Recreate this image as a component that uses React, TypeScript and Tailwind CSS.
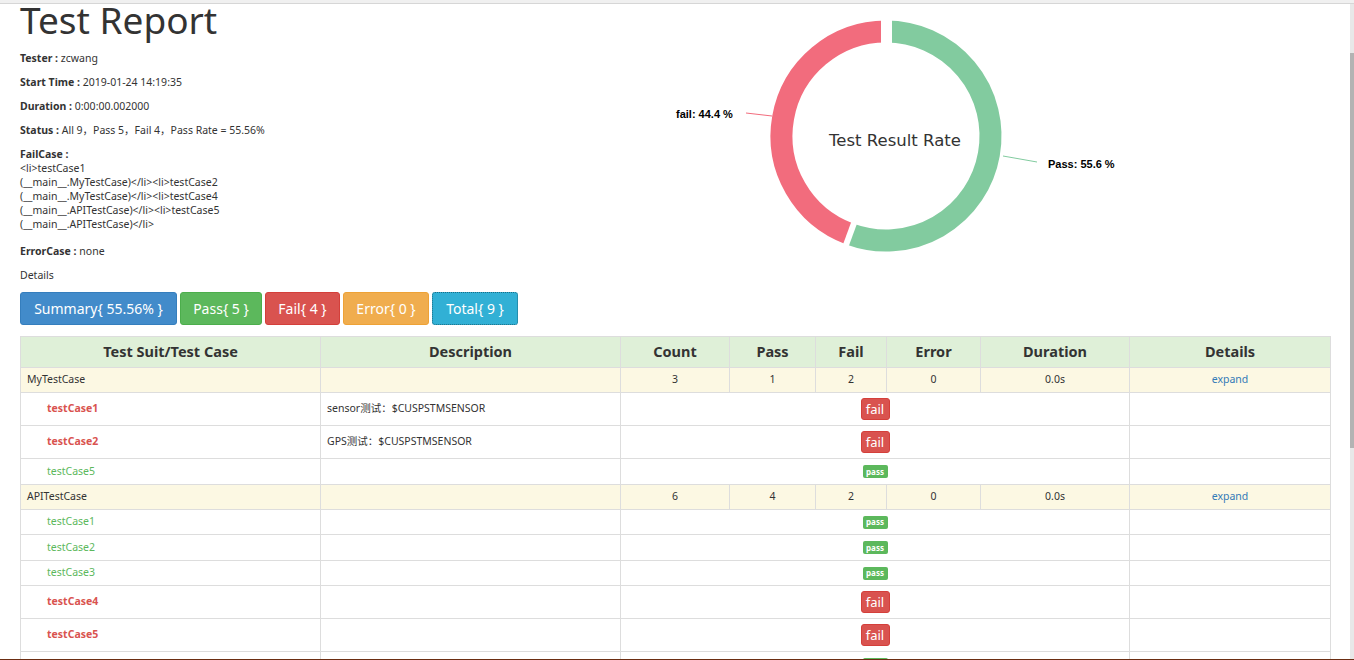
import React from "react";

type CaseRow = {
  name: string;
  desc?: string;
  status: "pass" | "fail";
  tall?: boolean;
};

type Suite = {
  name: string;
  count: number;
  pass: number;
  fail: number;
  error: number;
  duration: string;
  cases: CaseRow[];
};

const suites: Suite[] = [
  {
    name: "MyTestCase",
    count: 3,
    pass: 1,
    fail: 2,
    error: 0,
    duration: "0.0s",
    cases: [
      { name: "testCase1", desc: "sensor测试：$CUSPSTMSENSOR", status: "fail" },
      { name: "testCase2", desc: "GPS测试：$CUSPSTMSENSOR", status: "fail" },
      { name: "testCase5", status: "pass", tall: true },
    ],
  },
  {
    name: "APITestCase",
    count: 6,
    pass: 4,
    fail: 2,
    error: 0,
    duration: "0.0s",
    cases: [
      { name: "testCase1", status: "pass" },
      { name: "testCase2", status: "pass", tall: true },
      { name: "testCase3", status: "pass" },
      { name: "testCase4", status: "fail" },
      { name: "testCase5", status: "fail" },
      { name: "testCase6", status: "pass" },
    ],
  },
];

const FONT = "font-['Noto_Sans','Noto_Sans_CJK_SC',sans-serif]";

function Info({ label, children }: { label: string; children: React.ReactNode }) {
  return (
    <p className="mb-[10px] leading-[14px]">
      <b>{label} :</b> {children}
    </p>
  );
}

// donut geometry, svg coords = page coords - (640, 4)
const CX = 246;
const CY = 132;
const R = 104.5;

function polar(deg: number, r: number) {
  const a = (deg * Math.PI) / 180;
  return [CX + r * Math.sin(a), CY - r * Math.cos(a)];
}

function arc(from: number, to: number) {
  const [x1, y1] = polar(from, R);
  const [x2, y2] = polar(to, R);
  const large = to - from > 180 ? 1 : 0;
  return `M ${x1} ${y1} A ${R} ${R} 0 ${large} 1 ${x2} ${y2}`;
}

function Donut() {
  const split = 200.16;
  const [gx, gy] = polar(split, 130);
  return (
    <svg width="690" height="280" className="block">
      <line x1="249" y1="0" x2="251" y2="19" stroke="#f7c08a" strokeWidth="1" />
      <path d={arc(0, split)} fill="none" stroke="#82cb9f" strokeWidth="22" />
      <path d={arc(split, 360)} fill="none" stroke="#f26c7d" strokeWidth="22" />
      <line x1={CX + 0.5} y1={CY} x2={CX + 0.5} y2="0" stroke="#fff" strokeWidth="11" />
      <line x1={CX} y1={CY} x2={gx} y2={gy} stroke="#fff" strokeWidth="6" />
      <line x1="106" y1="109" x2="132" y2="112" stroke="#f26c7d" strokeWidth="1" />
      <line x1="363" y1="152" x2="397" y2="158" stroke="#82cb9f" strokeWidth="1" />
      <text
        x="36"
        y="114"
        fontFamily="'Liberation Sans', Arial, sans-serif"
        fontSize="11"
        fontWeight="bold"
        fill="#000"
      >
        fail: 44.4 %
      </text>
      <text
        x="408"
        y="164"
        fontFamily="'Liberation Sans', Arial, sans-serif"
        fontSize="11"
        fontWeight="bold"
        fill="#000"
      >
        Pass: 55.6 %
      </text>
      <text
        x="255"
        y="142"
        textAnchor="middle"
        fontFamily="'DejaVu Sans', Verdana, sans-serif"
        fontSize="16.5"
        fill="#333"
      >
        Test Result Rate
      </text>
    </svg>
  );
}

function Badge({ status }: { status: "pass" | "fail" }) {
  if (status === "fail") {
    return (
      <span className="inline-flex h-[22px] w-[29px] items-center justify-center rounded-[3px] border border-[#d43f3a] bg-[#d9534f] text-[13px] leading-none text-white">
        fail
      </span>
    );
  }
  return (
    <span className="inline-flex h-[13px] w-[25px] items-center justify-center rounded-[2px] bg-[#5cb85c] text-[8px] font-bold leading-none text-white">
      pass
    </span>
  );
}

const td = "border border-[#ddd] p-0";

function rowHeight(c: CaseRow) {
  if (c.status === "fail") return "h-[33px]";
  return c.tall ? "h-[26px]" : "h-[25px]";
}

export default function App() {
  return (
    <div className={`flex h-[660px] flex-col overflow-hidden bg-white text-[10.5px] text-[#333] ${FONT}`}>
      <div className="h-[4px] shrink-0 border-b border-[#d6d6d6] bg-[#f0f0f0]" />
      <div className="flex min-h-0 flex-1">
        <div className="min-w-0 flex-1 overflow-hidden px-5">
          <div className="flex items-start">
            <div className="w-[620px] shrink-0">
              <h1 className="mb-[15px] text-[37px] leading-[32px] font-normal text-[#333]">Test Report</h1>
              <Info label="Tester">zcwang</Info>
              <Info label="Start Time">2019-01-24 14:19:35</Info>
              <Info label="Duration">0:00:00.002000</Info>
              <Info label="Status">All 9，Pass 5，Fail 4，Pass Rate = 55.56%</Info>
              <div className="mb-[13px] leading-[14px]">
                <b>FailCase :</b>
                <br />
                {"<li>testCase1"}
                <br />
                {"(__main__.MyTestCase)</li><li>testCase2"}
                <br />
                {"(__main__.MyTestCase)</li><li>testCase4"}
                <br />
                {"(__main__.APITestCase)</li><li>testCase5"}
                <br />
                {"(__main__.APITestCase)</li>"}
              </div>
              <Info label="ErrorCase">none</Info>
              <p className="mb-[10px] leading-[14px]">Details</p>
            </div>
            <div className="flex-1">
              <Donut />
            </div>
          </div>

          <div className="mb-[11px] flex gap-[3px] text-[14px] leading-none text-white">
            <button className="h-[33px] w-[157px] rounded-[3px] border border-[#357ebd] bg-[#428bca]">
              Summary{"{"} 55.56% {"}"}
            </button>
            <button className="h-[33px] w-[82px] rounded-[3px] border border-[#4cae4c] bg-[#5cb85c]">
              Pass{"{"} 5 {"}"}
            </button>
            <button className="h-[33px] w-[75px] rounded-[3px] border border-[#d43f3a] bg-[#d9534f]">
              Fail{"{"} 4 {"}"}
            </button>
            <button className="h-[33px] w-[86px] rounded-[3px] border border-[#eea236] bg-[#f0ad4e]">
              Error{"{"} 0 {"}"}
            </button>
            <button className="h-[33px] w-[86px] rounded-[3px] border border-dotted border-[#1b6d85] bg-[#31b0d5]">
              Total{"{"} 9 {"}"}
            </button>
          </div>

          <table className="w-[1310px] table-fixed border-collapse">
            <colgroup>
              <col className="w-[300px]" />
              <col className="w-[300px]" />
              <col className="w-[109px]" />
              <col className="w-[86px]" />
              <col className="w-[71px]" />
              <col className="w-[94px]" />
              <col className="w-[149px]" />
              <col className="w-[201px]" />
            </colgroup>
            <thead>
              <tr className="h-[31px] bg-[#dff0d8] text-[14.5px] font-bold">
                <th className={td}>Test Suit/Test Case</th>
                <th className={td}>Description</th>
                <th className={td}>Count</th>
                <th className={td}>Pass</th>
                <th className={td}>Fail</th>
                <th className={td}>Error</th>
                <th className={td}>Duration</th>
                <th className={td}>Details</th>
              </tr>
            </thead>
            <tbody>
              {suites.map((s) => (
                <React.Fragment key={s.name}>
                  <tr className="h-[25px] bg-[#fcf8e3]">
                    <td className={`${td} pl-[6px]`}>{s.name}</td>
                    <td className={td}></td>
                    <td className={`${td} text-center`}>{s.count}</td>
                    <td className={`${td} text-center`}>{s.pass}</td>
                    <td className={`${td} text-center`}>{s.fail}</td>
                    <td className={`${td} text-center`}>{s.error}</td>
                    <td className={`${td} text-center`}>{s.duration}</td>
                    <td className={`${td} text-center text-[#337ab7]`}>expand</td>
                  </tr>
                  {s.cases.map((c) => (
                    <tr key={s.name + c.name} className={rowHeight(c)}>
                      <td
                        className={`${td} pl-[26px] ${
                          c.status === "fail" ? "font-bold text-[#d9534f]" : "text-[#5cb85c]"
                        }`}
                      >
                        {c.name}
                      </td>
                      <td className={`${td} pl-[6px]`}>{c.desc ?? ""}</td>
                      <td className={`${td} text-center`} colSpan={5}>
                        <div className="flex items-center justify-center">
                          <Badge status={c.status} />
                        </div>
                      </td>
                      <td className={td}></td>
                    </tr>
                  ))}
                </React.Fragment>
              ))}
            </tbody>
          </table>
        </div>
        <div className="flex w-[4px] shrink-0 flex-col bg-[#e8e8e8]">
          <div className="h-[49px] shrink-0" />
          <div className="h-[395px] shrink-0 bg-[#b3b3b3]" />
        </div>
      </div>
      <div className="h-px shrink-0 bg-[#6b2d12]" />
    </div>
  );
}
